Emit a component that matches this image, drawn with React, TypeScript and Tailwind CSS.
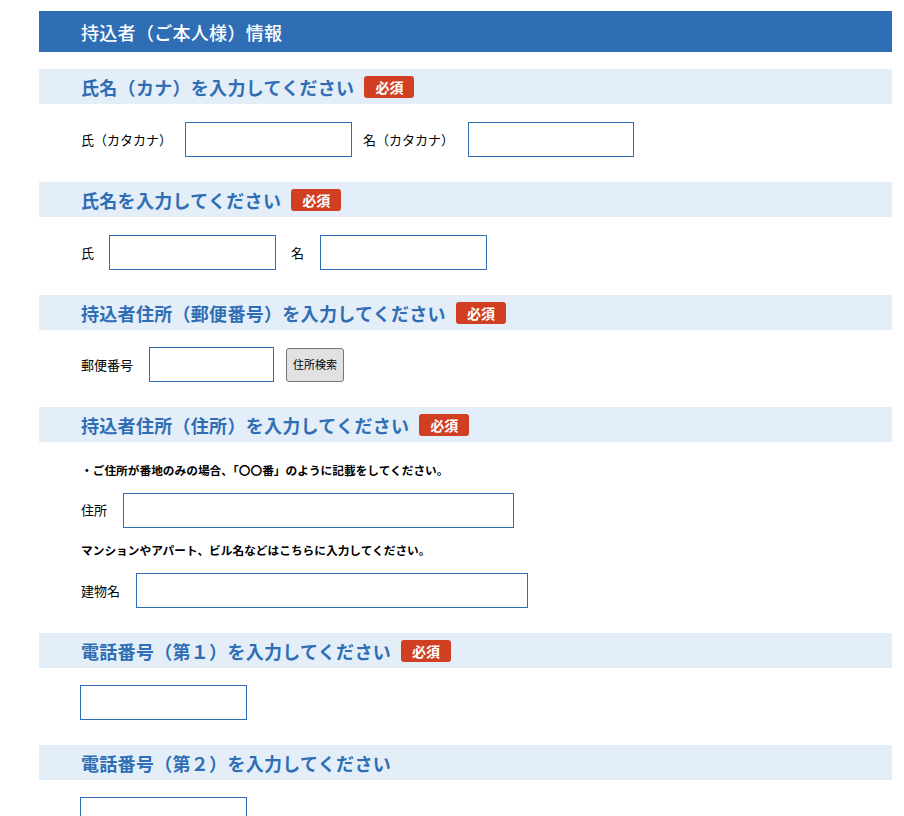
import React from 'react';

const FONT = { fontFamily: '"Noto Sans CJK JP", "Noto Sans", sans-serif' };

function Badge() {
  return (
    <span className="ml-[10px] inline-flex h-[22px] w-[50px] items-center justify-center rounded-[3px] bg-[#d03f22] text-[14px] font-bold leading-none text-white">
      必須
    </span>
  );
}

function SectionHead({ title, required }: { title: string; required?: boolean }) {
  return (
    <div className="flex h-[35px] items-center bg-[#e4eef8] pl-[42px]">
      <h3 className="text-[18px] font-bold leading-none tracking-[0.3px] text-[#2f6eb5]">{title}</h3>
      {required && <Badge />}
    </div>
  );
}

function Field({ w }: { w: string }) {
  return <input type="text" className={`h-[35px] border border-[#2f6eb5] bg-white outline-none ${w}`} />;
}

export default function App() {
  return (
    <div className="min-h-[816px] bg-white pt-[11px] pl-[39px] pr-[12px] text-black" style={FONT}>
      <div className="flex h-[41px] items-center bg-[#2f6eb5] pl-[42px]">
        <h2 className="text-[18px] font-medium leading-none tracking-[0.3px] text-white">持込者（ご本人様）情報</h2>
      </div>

      {/* カナ */}
      <div className="mt-[17px]">
        <SectionHead title="氏名（カナ）を入力してください" required />
        <div className="mt-[18px] flex items-center pl-[42px] text-[13px]">
          <span>氏（カタカナ）</span>
          <span className="ml-[13px]"><Field w="w-[167px]" /></span>
          <span className="ml-[11px]">名（カタカナ）</span>
          <span className="ml-[14px]"><Field w="w-[166px]" /></span>
        </div>
      </div>

      {/* 氏名 */}
      <div className="mt-[25px]">
        <SectionHead title="氏名を入力してください" required />
        <div className="mt-[18px] flex items-center pl-[42px] text-[13px]">
          <span>氏</span>
          <span className="ml-[15px]"><Field w="w-[167px]" /></span>
          <span className="ml-[15px]">名</span>
          <span className="ml-[16px]"><Field w="w-[167px]" /></span>
        </div>
      </div>

      {/* 郵便番号 */}
      <div className="mt-[25px]">
        <SectionHead title="持込者住所（郵便番号）を入力してください" required />
        <div className="mt-[17px] flex items-center pl-[42px] text-[13px]">
          <span>郵便番号</span>
          <span className="ml-[16px]"><Field w="w-[125px]" /></span>
          <button className="ml-[12px] h-[34px] w-[58px] rounded-[3px] border border-[#767676] bg-[#e1e1e1] text-[11px] leading-none">
            住所検索
          </button>
        </div>
      </div>

      {/* 住所 */}
      <div className="mt-[25px]">
        <SectionHead title="持込者住所（住所）を入力してください" required />
        <div className="pl-[42px]">
          <p className="mt-[22px] text-[11.7px] font-bold leading-none">・ご住所が番地のみの場合、「〇〇番」のように記載をしてください。</p>
          <div className="mt-[17px] flex items-center text-[13px]">
            <span>住所</span>
            <span className="ml-[16px]"><Field w="w-[391px]" /></span>
          </div>
          <p className="mt-[16px] text-[11.7px] font-bold leading-none">マンションやアパート、ビル名などはこちらに入力してください。</p>
          <div className="mt-[18px] flex items-center text-[13px]">
            <span>建物名</span>
            <span className="ml-[16px]"><Field w="w-[392px]" /></span>
          </div>
        </div>
      </div>

      {/* 電話1 */}
      <div className="mt-[25px]">
        <SectionHead title="電話番号（第１）を入力してください" required />
        <div className="mt-[17px] pl-[41px]">
          <Field w="w-[167px]" />
        </div>
      </div>

      {/* 電話2 */}
      <div className="mt-[25px]">
        <SectionHead title="電話番号（第２）を入力してください" />
        <div className="mt-[17px] pl-[41px]">
          <Field w="w-[167px]" />
        </div>
      </div>
    </div>
  );
}
